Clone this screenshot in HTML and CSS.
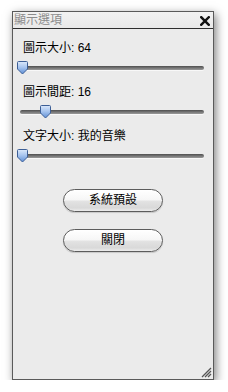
FILE: index.html
```html
<!DOCTYPE html>
<html lang="zh-Hant">
<head>
<meta charset="utf-8">
<link rel="stylesheet" href="styles.css">
</head>
<body>
<div class="window">
  <div class="titlebar">
    <span class="title">顯示選項</span>
    <svg class="close" width="10" height="10" viewBox="0 0 10 10"><path d="M1.2 1.2 L8.8 8.8 M8.8 1.2 L1.2 8.8" stroke="#111" stroke-width="2.4" stroke-linecap="square"/></svg>
  </div>
  <div class="content">
    <div class="group">
      <div class="label">圖示大小: 64</div>
      <div class="slider">
        <div class="track"></div>
        <svg class="thumb" style="left:4px" width="11" height="14" viewBox="0 0 11 14"><defs><linearGradient id="tg1" x1="0" y1="0" x2="0" y2="1"><stop offset="0" stop-color="#dbe8fa"/><stop offset="0.45" stop-color="#a9c6ef"/><stop offset="1" stop-color="#5f8fd6"/></linearGradient></defs><path d="M1.5 0.5 H9.5 Q10.5 0.5 10.5 1.5 V8 L5.5 13 L0.5 8 V1.5 Q0.5 0.5 1.5 0.5 Z" fill="url(#tg1)" stroke="#3d5f96" stroke-width="1"/></svg>
      </div>
    </div>
    <div class="group">
      <div class="label">圖示間距: 16</div>
      <div class="slider">
        <div class="track"></div>
        <svg class="thumb" style="left:27px" width="11" height="14" viewBox="0 0 11 14"><defs><linearGradient id="tg2" x1="0" y1="0" x2="0" y2="1"><stop offset="0" stop-color="#dbe8fa"/><stop offset="0.45" stop-color="#a9c6ef"/><stop offset="1" stop-color="#5f8fd6"/></linearGradient></defs><path d="M1.5 0.5 H9.5 Q10.5 0.5 10.5 1.5 V8 L5.5 13 L0.5 8 V1.5 Q0.5 0.5 1.5 0.5 Z" fill="url(#tg2)" stroke="#3d5f96" stroke-width="1"/></svg>
      </div>
    </div>
    <div class="group">
      <div class="label">文字大小: 我的音樂</div>
      <div class="slider">
        <div class="track"></div>
        <svg class="thumb" style="left:4px" width="11" height="14" viewBox="0 0 11 14"><defs><linearGradient id="tg3" x1="0" y1="0" x2="0" y2="1"><stop offset="0" stop-color="#dbe8fa"/><stop offset="0.45" stop-color="#a9c6ef"/><stop offset="1" stop-color="#5f8fd6"/></linearGradient></defs><path d="M1.5 0.5 H9.5 Q10.5 0.5 10.5 1.5 V8 L5.5 13 L0.5 8 V1.5 Q0.5 0.5 1.5 0.5 Z" fill="url(#tg3)" stroke="#3d5f96" stroke-width="1"/></svg>
      </div>
    </div>
    <div class="buttons">
      <button class="btn">系統預設</button>
      <button class="btn">關閉</button>
    </div>
    <svg class="grip" width="12" height="12" viewBox="0 0 12 12"><path d="M11 2 L2 11 M11 5 L5 11 M11 8 L8 11" stroke="#555" stroke-width="1.3"/></svg>
  </div>
</div>
</body>
</html>
```

FILE: styles.css
```css
html, body {
  margin: 0;
  background: #ffffff;
}
body {
  padding: 11px 0 0 12px;
  font-family: "Liberation Sans", "Noto Sans CJK TC", sans-serif;
  font-size: 12px;
  color: #000;
}
.window {
  width: 200px;
  height: 367px;
  border: 1px solid #5a5a5a;
  background: #ebebeb;
  display: flex;
  flex-direction: column;
  box-shadow: 2px 3px 9px rgba(0, 0, 0, 0.5);
}
.titlebar {
  height: 16px;
  border-bottom: 1px solid #2e2e2e;
  background: linear-gradient(#f2f2f2, #e9e9e9);
  display: flex;
  align-items: center;
  justify-content: space-between;
  padding: 0 3px 0 1px;
}
.title {
  color: #8c8c8c;
  font-size: 12px;
  line-height: 16px;
}
.close {
  display: block;
  margin-top: 1px;
}
.content {
  flex: 1;
  position: relative;
  padding-top: 12px;
}
.group {
  display: flex;
  flex-direction: column;
}
.label {
  height: 14px;
  line-height: 14px;
  padding-left: 10px;
  white-space: nowrap;
}
.slider {
  position: relative;
  height: 30px;
}
.track {
  margin: 11px 9px 0 7px;
  height: 4px;
  border-radius: 2px;
  background: linear-gradient(#4e4e4e, #7d7d7d 60%, #9a9a9a);
  box-shadow: 0 1px 0 #f8f8f8;
}
.thumb {
  position: absolute;
  top: 6px;
  display: block;
}
.buttons {
  display: flex;
  flex-direction: column;
  align-items: center;
  gap: 17px;
  margin-top: 16px;
}
.btn {
  width: 100px;
  height: 23px;
  margin: 0;
  padding: 0;
  border: 1px solid #5c5c5c;
  border-radius: 12px;
  background: linear-gradient(#ffffff 0%, #f7f7f7 45%, #e2e2e2 55%, #d9d9d9 85%, #ececec 100%);
  box-shadow: inset 0 1px 0 #ffffff, 0 1px 1px rgba(0, 0, 0, 0.15);
  font-family: "Liberation Sans", "Noto Sans CJK TC", sans-serif;
  font-size: 12px;
  color: #000;
  line-height: 21px;
}
.grip {
  position: absolute;
  right: 1px;
  bottom: 1px;
  display: block;
}
```
